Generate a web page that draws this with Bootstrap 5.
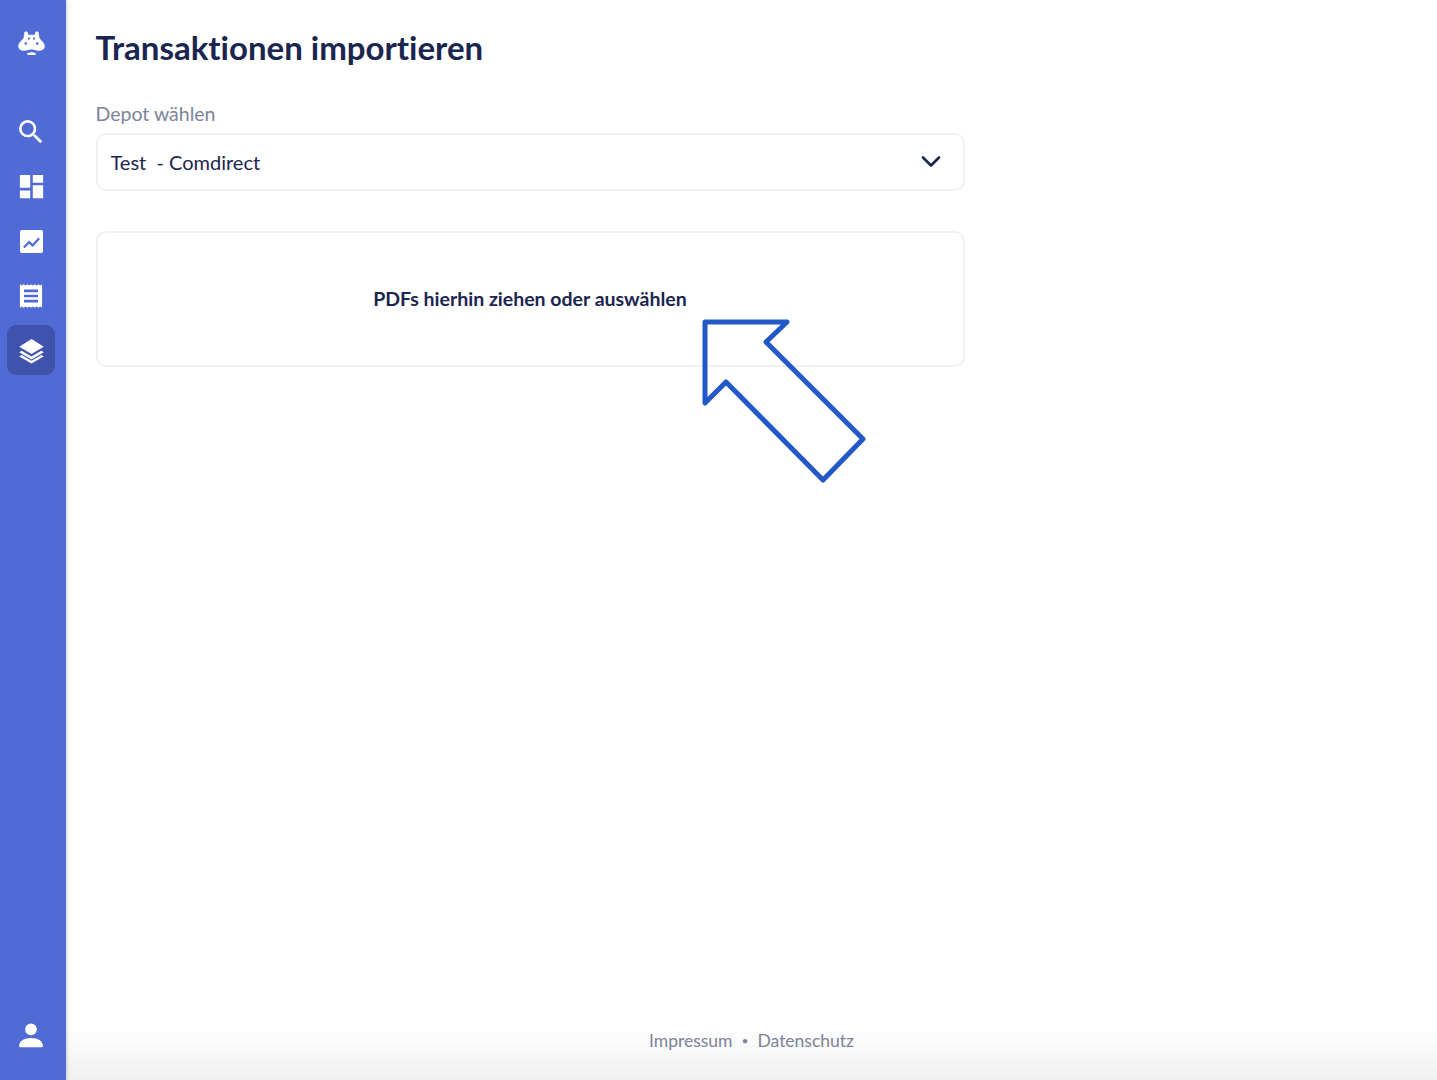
<!DOCTYPE html>
<html lang="de">
<head>
    <meta charset="UTF-8">
    <title>Transaktionen importieren</title>
    <meta name="viewport" content="width=device-width, initial-scale=1">
    <link href="https://cdn.jsdelivr.net/npm/bootstrap@5.3.0/dist/css/bootstrap.min.css" rel="stylesheet">
    <style>
        body { font-family: "Lato", "Noto Sans", sans-serif; color: #1b2550; background: #fff; font-variant-ligatures: none; }
        .app-shell { height: 100vh; }
        .side-rail { width: 66px; background: #506ad6; padding: 27px 11px 20px 7px; box-shadow: 1px 0 3px rgba(0, 0, 0, .18); z-index: 2; }
        .rail-logo { height: 32px; margin-bottom: 48px; }
        .rail-item { width: 48px; height: 50px; margin-bottom: 4.5px; border-radius: 9px; }
        .rail-item.is-active { background: #3f53ad; }
        .rail-item svg, .rail-logo svg { fill: #fff; }
        .page-area { padding: 29px 0 0 29.5px; }
        .page-title { font-size: 33px; font-weight: 700; line-height: 37px; margin-bottom: 36px; color: #1a2550; }
        .page-column { width: 869px; }
        .depot-label { font-size: 19.5px; line-height: 24px; color: #7b8499; margin-bottom: 7px; }
        .depot-select { height: 58px; font-size: 20px; color: #1b2550; border: 2px solid #f1f1f3; border-radius: 10px; padding: 0 40px 0 13px; box-shadow: none; background-position: right 22px top 20px; background-size: 20px 14px; background-image: url("data:image/svg+xml,%3csvg xmlns='http://www.w3.org/2000/svg' viewBox='0 0 20 14'%3e%3cpath fill='none' stroke='%231b2550' stroke-width='2.6' stroke-linecap='round' stroke-linejoin='round' d='M2 2.5l8 8 8-8'/%3e%3c/svg%3e"); }
        .drop-zone { height: 136px; margin-top: 40px; font-size: 19.5px; font-weight: 700; border: 2px solid #f1f1f3; border-radius: 10px; color: #1a2550; }
        .foot-bar { height: 80px; padding-top: 28px; font-size: 17.5px; color: #7b8499; background: linear-gradient(#fff 35%, #f0f0f0); }
        .foot-bar a { color: #7b8499; text-decoration: none; }
        .foot-dot { margin: 0 9px; font-size: 12px; line-height: 26px; }
        .hint-arrow { position: absolute; left: 690px; top: 305px; z-index: 3; }
    </style>
</head>
<body>
    <div class="app-shell d-flex position-relative">
        <nav class="side-rail d-flex flex-column align-items-center flex-shrink-0">
            <div class="rail-logo d-flex align-items-center justify-content-center">
                <svg width="29" height="29" viewBox="0 0 28 28">
                    <path fill-rule="evenodd" d="M7 3.500C7.500 2 10 2 10.500 3.500L10.800 5.500H17.200L17.500 3.500C18 2 20.500 2 21 3.500L21.500 8C22.300 11 26.500 12.500 26.800 16.500 27 20 23.500 21.500 20 21 17 20.500 16 19.800 14 19.800 12 19.800 11 20.500 8 21 4.500 21.500 1 20 1.200 16.500 1.500 12.500 5.700 11 6.500 8ZM11.500 8.100a1.100 1.100 0 1 0 0 2.200 1.100 1.100 0 0 0 0-2.200zM16.500 8.100a1.100 1.100 0 1 0 0 2.200 1.100 1.100 0 0 0 0-2.200zM8.500 12.700a1.300 1.300 0 1 0 0 2.600 1.300 1.300 0 0 0 0-2.600zM19.500 12.700a1.300 1.300 0 1 0 0 2.600 1.300 1.300 0 0 0 0-2.600z"/>
                    <path d="M10.300 23.200c2-.9 5.400-.9 7.400 0 .7.400.5 1.800-.3 1.800h-6.800c-.8 0-1-1.400-.3-1.800z"/>
                </svg>
            </div>
            <a class="rail-item d-flex align-items-center justify-content-center" href="#">
                <svg width="32" height="32" viewBox="0 0 24 24"><path d="M15.500 14h-.79l-.28-.27A6.470 6.470 0 0 0 16 9.500 6.500 6.500 0 1 0 9.500 16c1.610 0 3.090-.59 4.230-1.570l.27.28v.79l5 4.990L20.490 19l-4.990-5zm-6 0C7.010 14 5 11.990 5 9.500S7.010 5 9.500 5 14 7.010 14 9.500 11.990 14 9.500 14z"/></svg>
            </a>
            <a class="rail-item d-flex align-items-center justify-content-center" href="#">
                <svg width="31" height="31" viewBox="0 0 24 24"><path d="M3 13h8V3H3v10zm0 8h8v-6H3v6zm10 0h8V11h-8v10zm0-18v6h8V3h-8z"/></svg>
            </a>
            <a class="rail-item d-flex align-items-center justify-content-center" href="#">
                <svg width="29" height="29" viewBox="0 0 24 24"><path fill-rule="evenodd" d="M4 2.500h16A1.500 1.500 0 0 1 21.500 4v16a1.500 1.500 0 0 1-1.500 1.500H4A1.500 1.500 0 0 1 2.500 20V4A1.500 1.500 0 0 1 4 2.500zM5 16.300l1.300 1.300 3.700-3.800 3 2.700 6-6.500-1.300-1.300-4.800 5.200-2.900-2.700z"/></svg>
            </a>
            <a class="rail-item d-flex align-items-center justify-content-center" href="#">
                <svg width="28" height="28" viewBox="0 0 24 24"><path fill-rule="evenodd" d="M2.500 2l1.600 1 1.600-1 1.600 1 1.600-1 1.500 1 1.600-1 1.600 1 1.500-1 1.600 1 1.600-1 1.600 1 1.600-1v20l-1.600-1-1.600 1-1.600-1-1.600 1-1.500-1-1.600 1-1.600-1-1.500 1-1.600-1-1.600 1-1.600-1-1.600 1zM6 6.500v2.200h12V6.500zM6 10.900v2.200h12v-2.200zM6 15.300v2.200h12v-2.200z"/></svg>
            </a>
            <a class="rail-item is-active d-flex align-items-center justify-content-center" href="#">
                <svg width="31" height="31" viewBox="0 0 24 24"><path d="M12 3 2.500 9 12 14.700 21.500 9z"/><path d="M4.400 12.100 2.500 13.300 12 19l9.500-5.700-1.900-1.200L12 16.700z"/><path d="M4.400 15.500 2.500 16.700 12 22.100l9.500-5.400-1.900-1.200L12 20z"/></svg>
            </a>
            <a class="rail-item d-flex align-items-center justify-content-center mt-auto mb-0" href="#">
                <svg width="28" height="28" viewBox="0 0 24 24"><circle cx="12" cy="7.200" r="5"/><path d="M1.800 21.500c0-4.500 4.500-7 10.200-7s10.200 2.500 10.200 7c0 .6-.4 1-1 1H2.800c-.6 0-1-.4-1-1z"/></svg>
            </a>
        </nav>
        <div class="d-flex flex-column flex-grow-1">
            <main class="page-area flex-grow-1">
                <div class="page-column">
                    <h1 class="page-title">Transaktionen importieren</h1>
                    <label class="depot-label d-block" for="depot">Depot wählen</label>
                    <select class="form-select depot-select" id="depot">
                        <option>Test &nbsp;- Comdirect</option>
                    </select>
                    <div class="drop-zone d-flex align-items-center justify-content-center">PDFs hierhin ziehen oder auswählen</div>
                </div>
            </main>
            <footer class="foot-bar d-flex justify-content-center align-items-start">
                <a href="#">Impressum</a><span class="foot-dot">•</span><a href="#">Datenschutz</a>
            </footer>
        </div>
        <svg class="hint-arrow" width="190" height="190" viewBox="690 305 190 190">
            <path d="M705 322H787L766 342 863 439 823 480 726 382 705 403Z" fill="none" stroke="#2358c8" stroke-width="5" stroke-linejoin="round"/>
        </svg>
    </div>
    <script src="https://cdn.jsdelivr.net/npm/bootstrap@5.3.0/dist/js/bootstrap.bundle.min.js"></script>
</body>
</html>
